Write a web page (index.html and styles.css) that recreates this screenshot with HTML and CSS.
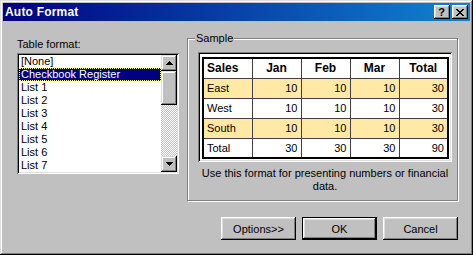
FILE: index.html
```html
<!DOCTYPE html>
<html>
<head>
<meta charset="utf-8">
<title>Auto Format</title>
<link rel="stylesheet" href="styles.css">
</head>
<body>
<div class="window">
  <div class="titlebar">
    <span class="title">Auto Format</span>
    <div class="tbtns">
      <div class="tbtn help">?</div>
      <div class="tbtn close">
        <svg width="8" height="7" viewBox="0 0 8 7" shape-rendering="crispEdges"><path d="M0 0h2v1H0z M6 0h2v1H6z M1 1h2v1H1z M5 1h2v1H5z M2 2h4v1H2z M3 3h2v1H3z M2 4h4v1H2z M1 5h2v1H1z M5 5h2v1H5z M0 6h2v1H0z M6 6h2v1H6z" fill="#000"/></svg>
      </div>
    </div>
  </div>
  <div class="content">
    <div class="main">
      <div class="left">
        <div class="label">Table format:</div>
        <div class="listbox">
          <div class="items">
            <div class="item">[None]</div>
            <div class="item selected">Checkbook Register</div>
            <div class="item">List 1</div>
            <div class="item">List 2</div>
            <div class="item">List 3</div>
            <div class="item">List 4</div>
            <div class="item">List 5</div>
            <div class="item">List 6</div>
            <div class="item">List 7</div>
          </div>
          <div class="scrollbar">
            <div class="sbtn"><svg width="7" height="4" viewBox="0 0 7 4" shape-rendering="crispEdges"><path d="M3 0h1v1H3z M2 1h3v1H2z M1 2h5v1H1z M0 3h7v1H0z" fill="#000"/></svg></div>
            <div class="thumb"></div>
            <div class="track"></div>
            <div class="sbtn"><svg width="7" height="4" viewBox="0 0 7 4" shape-rendering="crispEdges"><path d="M0 0h7v1H0z M1 1h5v1H1z M2 2h3v1H2z M3 3h1v1H3z" fill="#000"/></svg></div>
          </div>
        </div>
      </div>
      <div class="group">
        <span class="legend">Sample</span>
        <div class="panel">
          <table class="sample">
            <tr class="head"><th class="first">Sales</th><th>Jan</th><th>Feb</th><th>Mar</th><th>Total</th></tr>
            <tr class="hl"><td class="first">East</td><td>10</td><td>10</td><td>10</td><td>30</td></tr>
            <tr><td class="first">West</td><td>10</td><td>10</td><td>10</td><td>30</td></tr>
            <tr class="hl"><td class="first">South</td><td>10</td><td>10</td><td>10</td><td>30</td></tr>
            <tr><td class="first">Total</td><td>30</td><td>30</td><td>30</td><td>90</td></tr>
          </table>
        </div>
        <div class="desc">Use this format for presenting numbers or financial data.</div>
      </div>
    </div>
    <div class="buttons">
      <div class="btn">Options&gt;&gt;</div>
      <div class="btn default">OK</div>
      <div class="btn">Cancel</div>
    </div>
  </div>
</div>
</body>
</html>
```

FILE: styles.css
```css
* { box-sizing: border-box; }
html, body { margin: 0; padding: 0; }
body {
  width: 473px;
  height: 255px;
  overflow: hidden;
  background: #c0c0c0;
  font-family: "Liberation Sans", Arial, sans-serif;
  font-size: 11px;
  color: #000;
}
.window {
  width: 473px;
  height: 255px;
  padding: 3px;
  background: #c0c0c0;
  box-shadow: inset -1px -1px #000, inset 1px 1px #dfdfdf, inset -2px -2px #808080, inset 2px 2px #fff;
  display: flex;
  flex-direction: column;
}
.titlebar {
  height: 18px;
  background: linear-gradient(to right, #000080, #1084d0);
  display: flex;
  align-items: center;
  padding: 0 2px;
}
.title {
  flex: 1;
  color: #fff;
  font-weight: bold;
  font-size: 12px;
  letter-spacing: 0.2px;
}
.tbtns { display: flex; gap: 2px; }
.tbtn {
  width: 16px;
  height: 14px;
  background: #c0c0c0;
  box-shadow: inset -1px -1px #000, inset 1px 1px #fff, inset -2px -2px #808080, inset 2px 2px #dfdfdf;
  display: flex;
  align-items: center;
  justify-content: center;
}
.help { font-weight: bold; font-size: 11px; line-height: 14px; padding-right: 1px; }
.close svg { display: block; margin-left: -1px; }
.content {
  flex: 1;
  padding: 17px 11px 0 14px;
}
.main { display: flex; align-items: flex-start; }
.left { width: 162px; }
.label { height: 13px; line-height: 13px; margin-bottom: 2px; }
.listbox {
  height: 121px;
  padding: 2px;
  background: #fff;
  box-shadow: inset 1px 1px #808080, inset -1px -1px #fff, inset 2px 2px #000, inset -2px -2px #dfdfdf;
  display: flex;
}
.items { flex: 1; overflow: hidden; }
.item {
  height: 13px;
  line-height: 13px;
  padding-left: 2px;
  white-space: nowrap;
}
.item.selected {
  background: #000080;
  color: #fff;
  outline: 1px dotted #ffff80;
  outline-offset: -1px;
}
.scrollbar {
  width: 16px;
  display: flex;
  flex-direction: column;
}
.sbtn, .thumb {
  background: #c0c0c0;
  box-shadow: inset -1px -1px #000, inset 1px 1px #dfdfdf, inset -2px -2px #808080, inset 2px 2px #fff;
}
.sbtn {
  height: 16px;
  display: flex;
  align-items: center;
  justify-content: center;
}
.sbtn svg { display: block; }
.thumb { height: 34px; }
.track {
  flex: 1;
  background: repeating-conic-gradient(#c0c0c0 0 25%, #fff 0 50%) 0 0 / 2px 2px;
}
.group {
  position: relative;
  width: 271px;
  height: 163px;
  margin-left: 8px;
  border: 1px solid #808080;
  box-shadow: 1px 1px 0 #fff, inset 1px 1px 0 #fff;
  padding: 13px 0 0 10px;
}
.legend {
  position: absolute;
  top: -7px;
  left: 7px;
  padding: 0 1px;
  line-height: 13px;
  background: #c0c0c0;
}
.panel {
  width: 254px;
  height: 110px;
  padding: 5px 3px 0 4px;
  background: #fff;
  box-shadow: inset 1px 1px #808080, inset -1px -1px #fff, inset 2px 2px #000, inset -2px -2px #dfdfdf;
}
.sample {
  width: 247px;
  table-layout: fixed;
  border-collapse: collapse;
  border: 2px solid #000;
}
.sample th, .sample td {
  border: 1px solid #404040;
  height: 20px;
  padding: 0 3px;
  font-size: 11px;
  text-align: right;
  white-space: nowrap;
}
.sample th { text-align: center; font-weight: bold; font-size: 12px; background: #fff; }
.sample .first { text-align: left; }
.sample tr.hl td { background: #ffe9a4; }
.desc {
  width: 254px;
  margin-top: 5px;
  line-height: 13px;
  text-align: center;
}
.buttons {
  display: flex;
  justify-content: flex-end;
  gap: 6px;
  margin-top: 16px;
  margin-right: 1px;
}
.btn {
  width: 75px;
  height: 23px;
  display: flex;
  align-items: center;
  justify-content: center;
  background: #c0c0c0;
  box-shadow: inset -1px -1px #000, inset 1px 1px #fff, inset -2px -2px #808080, inset 2px 2px #dfdfdf;
}
.btn.default {
  border: 1px solid #000;
  box-shadow: inset -1px -1px #000, inset 1px 1px #fff, inset -2px -2px #808080, inset 2px 2px #dfdfdf;
}
```
